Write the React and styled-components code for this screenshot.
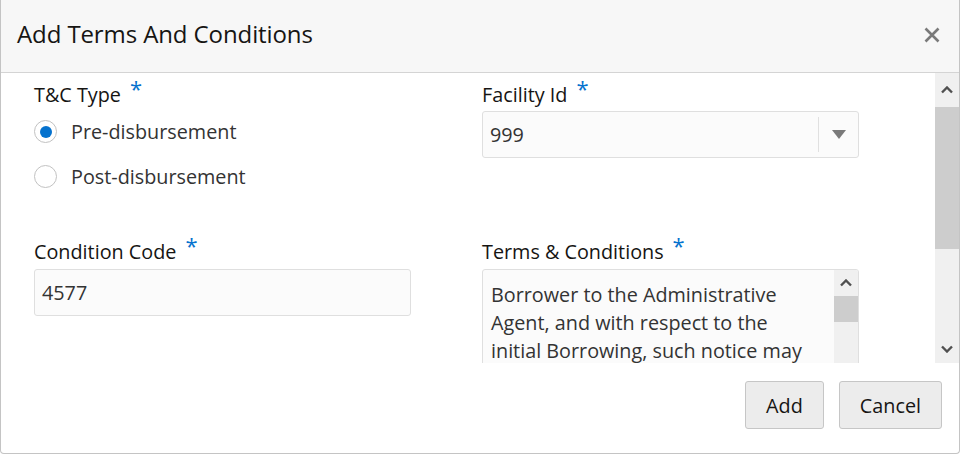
import React from "react";
import styled, { createGlobalStyle } from "styled-components";

const Global = createGlobalStyle`
  html, body { margin: 0; padding: 0; background: #ffffff; }
  body { font-family: "Open Sans", "Noto Sans", "Liberation Sans", sans-serif; color: #161513; }
  * { box-sizing: border-box; }
`;

const Dialog = styled.div`
  width: 960px;
  height: 454px;
  border: 1px solid #c4c4c4;
  border-top: none;
  border-radius: 0 0 4px 4px;
  display: flex;
  flex-direction: column;
  overflow: hidden;
  background: #fff;
`;

const Header = styled.div`
  height: 73px;
  flex: none;
  background: #f7f7f7;
  border-bottom: 1px solid #d4d4d4;
  display: flex;
  align-items: center;
  justify-content: space-between;
  padding: 0 18px 6px 16px;
`;

const Title = styled.h1`
  margin: 0;
  font-size: 24px;
  font-weight: 400;
  color: #161513;
  letter-spacing: -0.1px;
`;

const CloseButton = styled.button`
  border: none;
  background: transparent;
  padding: 0;
  width: 18px;
  height: 18px;
  display: flex;
  align-items: center;
  justify-content: center;
  margin-top: 4px;
  cursor: pointer;
`;

const BodyRow = styled.div`
  height: 290px;
  flex: none;
  display: flex;
  overflow: hidden;
`;

const Content = styled.div`
  flex: 1;
  overflow: hidden;
  padding: 6px 0 0 33px;
`;

const FormGrid = styled.div`
  display: grid;
  grid-template-columns: 377px 377px;
  column-gap: 71px;
  row-gap: 37px;
  align-items: start;
`;

const Field = styled.div`
  display: flex;
  flex-direction: column;
`;

const Label = styled.label`
  font-size: 19.8px;
  line-height: 28px;
  height: 28px;
  color: #161513;
  margin-bottom: ${(p) => p.$gap || 0}px;
  white-space: nowrap;
`;

const Required = styled.span`
  color: #0572ce;
  font-size: 22px;
  margin-left: 9px;
  position: relative;
  top: -5px;
`;

const RadioGroup = styled.div`
  display: flex;
  flex-direction: column;
  margin-top: 2px;
`;

const RadioRow = styled.div`
  height: 45px;
  display: flex;
  align-items: center;
  gap: 14px;
  font-size: 19.8px;
  color: #333333;
`;

const RadioCircle = styled.span`
  width: 23px;
  height: 23px;
  border-radius: 50%;
  border: 1.5px solid #c2c2c2;
  background: #fff;
  display: flex;
  align-items: center;
  justify-content: center;
  flex: none;
  &::after {
    content: "";
    width: 12px;
    height: 12px;
    border-radius: 50%;
    background: ${(p) => (p.$checked ? "#0572ce" : "transparent")};
  }
`;

const InputBox = styled.div`
  height: 47px;
  border: 1px solid #dfdfdf;
  border-radius: 3px;
  background: #fbfbfb;
  display: flex;
  align-items: center;
  font-size: 19.8px;
  color: #333333;
`;

const InputValue = styled.span`
  flex: 1;
  padding-left: 7px;
`;

const SelectDivider = styled.span`
  width: 1px;
  height: 35px;
  background: #e0e0e0;
`;

const SelectArrow = styled.span`
  width: 39px;
  display: flex;
  justify-content: center;
  align-items: center;
`;

const TextAreaBox = styled.div`
  height: 140px;
  border: 1px solid #dfdfdf;
  border-radius: 3px;
  background: #fbfbfb;
  display: flex;
  overflow: hidden;
`;

const TextAreaText = styled.div`
  flex: 1;
  padding: 11px 8px 0 8px;
  font-size: 19.8px;
  line-height: 28px;
  color: #333333;
  white-space: nowrap;
  overflow: hidden;
`;

const Line = styled.div``;

const ScrollTrack = styled.div`
  width: 24px;
  flex: none;
  background: #f0f0f0;
  display: flex;
  flex-direction: column;
`;

const ArrowCell = styled.div`
  height: ${(p) => p.$h}px;
  flex: none;
  display: flex;
  align-items: center;
  justify-content: center;
`;

const Thumb = styled.div`
  height: ${(p) => p.$h}px;
  flex: none;
  background: #cdcdcd;
`;

const Spacer = styled.div`
  flex: 1;
`;

const Footer = styled.div`
  flex: 1;
  display: flex;
  justify-content: flex-end;
  align-items: flex-start;
  gap: 15px;
  padding: 18px 17px 0 0;
`;

const Button = styled.button`
  height: 48px;
  padding: 0 20px;
  border: 1px solid #c6c6c6;
  border-radius: 3px;
  background: #ececec;
  font-family: inherit;
  font-size: 19.8px;
  color: #161513;
  cursor: pointer;
`;

const Chevron = ({ down }) => (
  <svg width="12" height="8" viewBox="0 0 12 8">
    <polyline
      points={down ? "1,1.5 6,6.5 11,1.5" : "1,6.5 6,1.5 11,6.5"}
      fill="none"
      stroke="#505050"
      strokeWidth="2.4"
    />
  </svg>
);

const CloseIcon = () => (
  <svg width="16" height="16" viewBox="0 0 16 16">
    <path d="M1.5 1.5 L14.5 14.5 M14.5 1.5 L1.5 14.5" stroke="#7a7a7a" strokeWidth="2.6" />
  </svg>
);

const Caret = () => (
  <svg width="14" height="9" viewBox="0 0 14 9">
    <polygon points="0,0 14,0 7,9" fill="#7a7a7a" />
  </svg>
);

const textLines = [
  "Borrower to the Administrative",
  "Agent, and with respect to the",
  "initial Borrowing, such notice may",
];

export default function App() {
  return (
    <>
      <Global />
      <Dialog>
        <Header>
          <Title>Add Terms And Conditions</Title>
          <CloseButton aria-label="Close">
            <CloseIcon />
          </CloseButton>
        </Header>
        <BodyRow>
          <Content>
            <FormGrid>
              <Field>
                <Label>
                  T&amp;C Type<Required>*</Required>
                </Label>
                <RadioGroup>
                  <RadioRow>
                    <RadioCircle $checked />
                    Pre-disbursement
                  </RadioRow>
                  <RadioRow>
                    <RadioCircle />
                    Post-disbursement
                  </RadioRow>
                </RadioGroup>
              </Field>
              <Field>
                <Label $gap={4}>
                  Facility Id<Required>*</Required>
                </Label>
                <InputBox>
                  <InputValue>999</InputValue>
                  <SelectDivider />
                  <SelectArrow>
                    <Caret />
                  </SelectArrow>
                </InputBox>
              </Field>
              <Field>
                <Label $gap={5}>
                  Condition Code<Required>*</Required>
                </Label>
                <InputBox>
                  <InputValue>4577</InputValue>
                </InputBox>
              </Field>
              <Field>
                <Label $gap={5}>
                  Terms &amp; Conditions<Required>*</Required>
                </Label>
                <TextAreaBox>
                  <TextAreaText>
                    {textLines.map((l) => (
                      <Line key={l}>{l}</Line>
                    ))}
                  </TextAreaText>
                  <ScrollTrack>
                    <ArrowCell $h={26}>
                      <Chevron />
                    </ArrowCell>
                    <Thumb $h={26} />
                    <Spacer />
                  </ScrollTrack>
                </TextAreaBox>
              </Field>
            </FormGrid>
          </Content>
          <ScrollTrack>
            <ArrowCell $h={34}>
              <Chevron />
            </ArrowCell>
            <Thumb $h={142} />
            <Spacer />
            <ArrowCell $h={28}>
              <Chevron down />
            </ArrowCell>
          </ScrollTrack>
        </BodyRow>
        <Footer>
          <Button>Add</Button>
          <Button>Cancel</Button>
        </Footer>
      </Dialog>
    </>
  );
}
